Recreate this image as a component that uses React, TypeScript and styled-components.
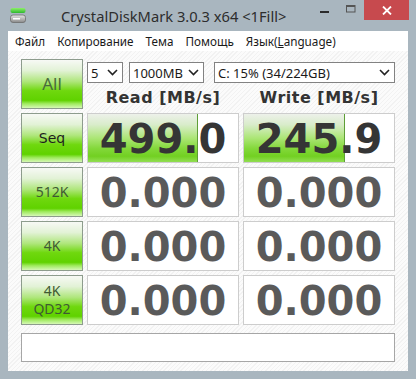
import React from "react";
import styled, { createGlobalStyle } from "styled-components";

const Global = createGlobalStyle`
  html, body { margin: 0; padding: 0; background: #a9b6bf; }
  body { width: 416px; height: 379px; overflow: hidden; }
`;

const Window = styled.div`
  width: 416px;
  height: 379px;
  background: #a9b6bf;
  display: flex;
  flex-direction: column;
  font-family: "Noto Sans", "DejaVu Sans", sans-serif;
  box-sizing: border-box;
`;

const TitleBar = styled.div`
  height: 31px;
  display: flex;
  align-items: flex-start;
  position: relative;
`;

const AppIcon = styled.svg`
  margin: 7px 0 0 9px;
  width: 18px;
  height: 18px;
`;

const Title = styled.div`
  margin: 6px 0 0 34px;
  font-size: 14.7px;
  color: #2d2d2d;
`;

const Controls = styled.div`
  margin-left: auto;
  margin-right: 7px;
  display: flex;
  align-items: flex-start;
`;

const CtrlBtn = styled.div<{ $close?: boolean }>`
  width: ${(p) => (p.$close ? 45 : 26)}px;
  height: 20px;
  background: ${(p) => (p.$close ? "#c74a4e" : "transparent")};
  display: flex;
  align-items: center;
  justify-content: center;
`;

const Client = styled.div`
  margin: 0 8px 8px 8px;
  flex: 1;
  display: flex;
  flex-direction: column;
  background: repeating-linear-gradient(135deg, #fbfbfb 0 2px, #f2f2f2 2px 3px);
`;

const MenuBar = styled.div`
  height: 20px;
  background: #ffffff;
  display: flex;
  align-items: center;
  padding-left: 1px;
`;

const MenuItem = styled.div`
  padding: 0 6px;
  font-size: 11.7px;
  color: #1a1a1a;
  line-height: 20px;
`;

const Content = styled.div`
  padding: 8px 13px 8px 13px;
  display: flex;
  flex-direction: column;
  gap: 8px;
`;

const Grid = styled.div`
  display: grid;
  grid-template-columns: 62px 152px 152px;
  grid-auto-rows: 50px;
  gap: 4px;
`;

const TestButton = styled.div<{ $comic?: boolean }>`
  box-sizing: border-box;
  border: 1px solid #8d9c8d;
  background: linear-gradient(
    to bottom,
    #f7f9f5 0%,
    #e2f2d6 22%,
    #aee67a 45%,
    #6fd80e 64%,
    #60d200 84%,
    #9fea5e 91%,
    #d6f8b6 100%
  );
  display: flex;
  flex-direction: column;
  align-items: center;
  justify-content: center;
  color: ${(p) => (p.$comic ? "#1e1e1e" : "#3f5a33")};
  font-family: ${(p) =>
    p.$comic ? '"DejaVu Sans", sans-serif' : '"Noto Sans", sans-serif'};
  font-size: ${(p) => (p.$comic ? "14px" : "14px")};
  line-height: 18px;
  text-align: center;
`;

const BigLabel = styled.span`
  font-size: 17px;
  color: #4a6a3c;
`;

const TopPanel = styled.div`
  grid-column: 2 / 4;
  display: flex;
  flex-direction: column;
`;

const SelectRow = styled.div`
  margin-top: 3px;
  display: flex;
  height: 21px;
`;

const SelectBox = styled.div<{ $w: number; $ml: number }>`
  box-sizing: border-box;
  width: ${(p) => p.$w}px;
  margin-left: ${(p) => p.$ml}px;
  height: 21px;
  border: 1px solid #828282;
  background: #ffffff;
  display: flex;
  align-items: center;
  padding: 0 4px 0 3px;
  font-size: 13px;
  color: #1a1a1a;
`;

const SelectText = styled.span`
  flex: 1;
  white-space: nowrap;
`;

const HeaderRow = styled.div`
  display: grid;
  grid-template-columns: 152px 152px;
  gap: 4px;
  margin-top: 5px;
`;

const Header = styled.div`
  text-align: center;
  font-family: "DejaVu Sans", sans-serif;
  font-weight: bold;
  font-size: 16px;
  letter-spacing: 0.5px;
  color: #333333;
  line-height: 20px;
`;

const ValueBox = styled.div`
  box-sizing: border-box;
  position: relative;
  border: 1px solid #cdcdcd;
  background: #ffffff;
  overflow: hidden;
  display: flex;
  align-items: center;
  justify-content: center;
`;

const Fill = styled.div`
  position: absolute;
  left: 0;
  top: 0;
  bottom: 0;
  box-sizing: border-box;
  border-right: 1px solid #5e9e36;
  background: linear-gradient(
    to bottom,
    #edf1ea 0%,
    #d9eccb 22%,
    #ace676 50%,
    #83d83a 72%,
    #72d022 88%,
    #92de52 100%
  );
`;

const Number = styled.span<{ $active?: boolean }>`
  position: relative;
  font-family: "DejaVu Sans", sans-serif;
  font-weight: bold;
  font-size: 40px;
  line-height: 48px;
  color: ${(p) => (p.$active ? "#353535" : "#5a5a5a")};
  margin-top: 1px;
`;

const StatusBar = styled.div`
  box-sizing: border-box;
  width: 374px;
  height: 29px;
  border: 1px solid #a6a6a6;
  background: #ffffff;
`;

const Chevron = () => (
  <svg width="11" height="7" viewBox="0 0 11 7">
    <path d="M1 1 L5.5 5.5 L10 1" fill="none" stroke="#222" strokeWidth="1.6" />
  </svg>
);

type Row = {
  label: React.ReactNode;
  comic?: boolean;
  read: string;
  write: string;
  readFill: number;
  writeFill: number;
};

const rows: Row[] = [
  { label: "Seq", comic: true, read: "499.0", write: "245.9", readFill: 110, writeFill: 101 },
  { label: "512K", read: "0.000", write: "0.000", readFill: 0, writeFill: 0 },
  { label: "4K", read: "0.000", write: "0.000", readFill: 0, writeFill: 0 },
  {
    label: (
      <>
        4K
        <br />
        QD32
      </>
    ),
    read: "0.000",
    write: "0.000",
    readFill: 0,
    writeFill: 0,
  },
];

export default function App() {
  return (
    <>
      <Global />
      <Window>
        <TitleBar>
          <AppIcon viewBox="0 0 18 18">
            <defs>
              <linearGradient id="gt" x1="0" y1="0" x2="0" y2="1">
                <stop offset="0" stopColor="#8ef06a" />
                <stop offset="1" stopColor="#2eb82e" />
              </linearGradient>
              <linearGradient id="gd" x1="0" y1="0" x2="0" y2="1">
                <stop offset="0" stopColor="#e6e6e6" />
                <stop offset="1" stopColor="#8a8a8a" />
              </linearGradient>
            </defs>
            <rect x="1.5" y="1" width="15" height="5" rx="2" fill="url(#gt)" />
            <rect x="1.5" y="8" width="15" height="7.5" rx="2.5" fill="url(#gd)" stroke="#6d6d6d" strokeWidth="0.8" />
            <rect x="4" y="11" width="7" height="1.5" fill="#ffffff" />
          </AppIcon>
          <Title>CrystalDiskMark 3.0.3 x64 &lt;1Fill&gt;</Title>
          <Controls>
            <CtrlBtn>
              <svg width="10" height="10" viewBox="0 0 10 10">
                <rect x="0" y="6" width="9" height="2" fill="#2b2b2b" />
              </svg>
            </CtrlBtn>
            <CtrlBtn>
              <svg width="10" height="10" viewBox="0 0 10 10">
                <rect x="0.5" y="0.5" width="8.5" height="6.5" fill="none" stroke="#555" strokeWidth="1" />
                <rect x="0.5" y="0.5" width="8.5" height="1.5" fill="#555" />
              </svg>
            </CtrlBtn>
            <CtrlBtn $close>
              <svg width="10" height="9" viewBox="0 0 10 9">
                <path d="M1 0.5 L9 8.5 M9 0.5 L1 8.5" stroke="#fff" strokeWidth="1.8" />
              </svg>
            </CtrlBtn>
          </Controls>
        </TitleBar>
        <Client>
          <MenuBar>
            <MenuItem>Файл</MenuItem>
            <MenuItem>Копирование</MenuItem>
            <MenuItem>Тема</MenuItem>
            <MenuItem>Помощь</MenuItem>
            <MenuItem>
              Язык(<u>L</u>anguage)
            </MenuItem>
          </MenuBar>
          <Content>
            <Grid>
              <TestButton>
                <BigLabel>All</BigLabel>
              </TestButton>
              <TopPanel>
                <SelectRow>
                  <SelectBox $w={36} $ml={0}>
                    <SelectText>5</SelectText>
                    <Chevron />
                  </SelectBox>
                  <SelectBox $w={75} $ml={6}>
                    <SelectText>1000MB</SelectText>
                    <Chevron />
                  </SelectBox>
                  <SelectBox $w={181} $ml={10}>
                    <SelectText>C: 15% (34/224GB)</SelectText>
                    <Chevron />
                  </SelectBox>
                </SelectRow>
                <HeaderRow>
                  <Header>Read [MB/s]</Header>
                  <Header>Write [MB/s]</Header>
                </HeaderRow>
              </TopPanel>
              {rows.map((r, i) => (
                <React.Fragment key={i}>
                  <TestButton $comic={r.comic}>{r.label}</TestButton>
                  <ValueBox>
                    {r.readFill > 0 && <Fill style={{ width: r.readFill }} />}
                    <Number $active={r.readFill > 0}>{r.read}</Number>
                  </ValueBox>
                  <ValueBox>
                    {r.writeFill > 0 && <Fill style={{ width: r.writeFill }} />}
                    <Number $active={r.writeFill > 0}>{r.write}</Number>
                  </ValueBox>
                </React.Fragment>
              ))}
            </Grid>
            <StatusBar />
          </Content>
        </Client>
      </Window>
    </>
  );
}
